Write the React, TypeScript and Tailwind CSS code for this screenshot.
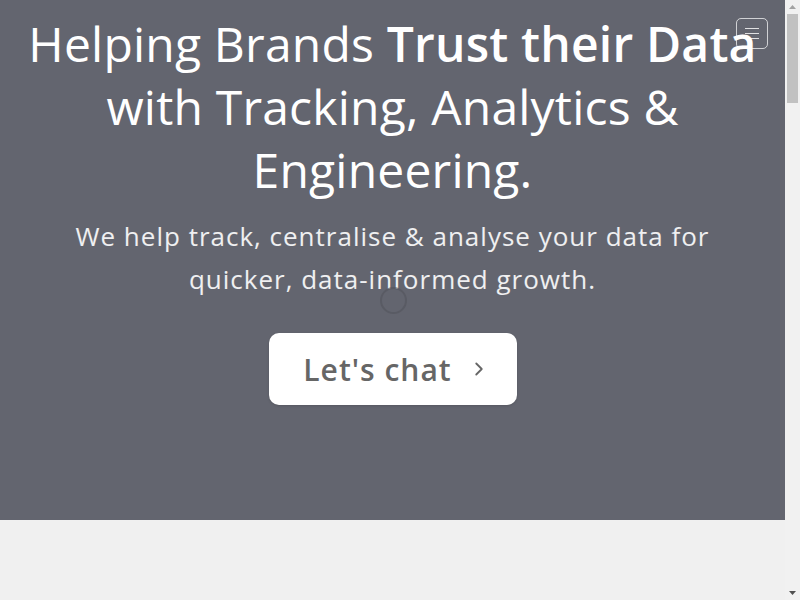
import { ChevronRight } from "lucide-react";

function Scrollbar() {
  return (
    <div className="flex w-[15px] shrink-0 flex-col items-center bg-[#f1f1f1]">
      <div className="flex h-[14px] w-full items-center justify-center">
        <svg width="7" height="4" viewBox="0 0 7 4">
          <path d="M3.5 0 L7 4 L0 4 Z" fill="#a3a3a3" />
        </svg>
      </div>
      <div className="h-[89px] w-[11px] bg-[#c1c1c1]" />
      <div className="flex-1" />
      <div className="flex h-[15px] w-full items-center justify-center">
        <svg width="7" height="4" viewBox="0 0 7 4">
          <path d="M0 0 L7 0 L3.5 4 Z" fill="#505050" />
        </svg>
      </div>
    </div>
  );
}

export default function App() {
  return (
    <div className="flex h-[600px] overflow-hidden bg-[#f0f0f0] font-['Open_Sans',sans-serif]">
      <main className="flex-1">
        {/* Hero */}
        <section className="relative h-[520px] bg-[#63656f] text-white">
          <button className="absolute right-[17px] top-[18px] flex h-[31px] w-[32px] flex-col items-center justify-center gap-[4px] rounded-[5px] border border-white/70">
            <span className="h-px w-[14px] bg-white/80" />
            <span className="h-px w-[14px] bg-white/80" />
            <span className="h-px w-[14px] bg-white/80" />
          </button>

          <div className="flex flex-col items-center px-6 pt-[12px] text-center">
            <h1 className="text-[48px] leading-[63px] font-normal tracking-[0.2px]">
              Helping Brands <strong className="font-semibold">Trust their Data</strong>
              <br />
              with Tracking, Analytics &amp;
              <br />
              Engineering.
            </h1>
            <p className="mt-[14px] text-[26px] leading-[43px] tracking-[1px] text-white/90">
              We help track, centralise &amp; analyse your data for
              <br />
              quicker, data-informed growth.
            </p>
            <a
              href="#"
              className="mt-[32px] flex h-[72px] w-[248px] items-center justify-center gap-[16px] rounded-[10px] bg-white pl-[8px] text-[30px] font-semibold tracking-[1px] text-[#666666] shadow-sm"
            >
              Let's chat
              <ChevronRight className="h-[22px] w-[22px]" strokeWidth={2} />
            </a>
          </div>

          {/* loading spinner */}
          <div className="absolute left-[380px] top-[287px] h-[27px] w-[27px] rounded-full border-2 border-[#55575f]/70" />
        </section>
      </main>
      <Scrollbar />
    </div>
  );
}
